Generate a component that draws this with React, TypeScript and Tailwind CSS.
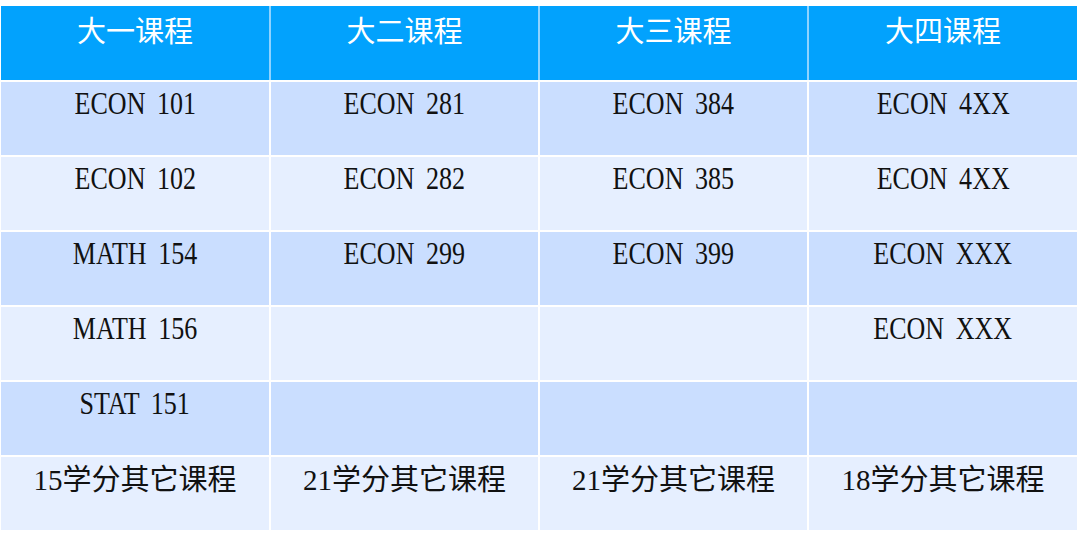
const header = ["大一课程", "大二课程", "大三课程", "大四课程"]

const rows = [
    ["ECON 101", "ECON 281", "ECON 384", "ECON 4XX"],
    ["ECON 102", "ECON 282", "ECON 385", "ECON 4XX"],
    ["MATH 154", "ECON 299", "ECON 399", "ECON XXX"],
    ["MATH 156", "", "", "ECON XXX"],
    ["STAT 151", "", "", ""],
]

const footer = ["15学分其它课程", "21学分其它课程", "21学分其它课程", "18学分其它课程"]

const cols = "grid grid-cols-[268px_267px_267px_268px] gap-x-[2px]"

export default function App() {
    return (
        <div className="w-[1080px] h-[533px] bg-white pt-[6px] pl-[1px] overflow-hidden">
            <div className="flex flex-col gap-y-[2px] w-[1076px]">
                {/* Header */}
                <div className={`${cols} bg-[#8ed3ff]`}>
                    {header.map((h) => (
                        <div
                            key={h}
                            className="h-[74px] bg-[#02a2fd] text-white text-center text-[29px] leading-none pt-[9px] font-['Noto_Sans_CJK_SC',sans-serif]"
                        >
                            {h}
                        </div>
                    ))}
                </div>

                {/* Course rows */}
                {rows.map((row, i) => (
                    <div key={i} className={`${cols} bg-white`}>
                        {row.map((c, j) => (
                            <div
                                key={j}
                                className={`h-[73px] text-center pt-[6px] ${i % 2 === 0 ? "bg-[#cadeff]" : "bg-[#e6efff]"}`}
                            >
                                {c && (
                                    <span className="inline-block scale-x-[0.84] text-[31px] leading-none text-[#111] [word-spacing:6px] font-['Liberation_Serif',serif]">
                                        {c}
                                    </span>
                                )}
                            </div>
                        ))}
                    </div>
                ))}

                {/* Credits row */}
                <div className={`${cols} bg-white`}>
                    {footer.map((f, j) => (
                        <div
                            key={j}
                            className="h-[73px] bg-[#e6efff] text-center pt-[9px] text-[29px] leading-none text-[#111] font-['Liberation_Serif','Noto_Sans_CJK_SC',serif]"
                        >
                            {f}
                        </div>
                    ))}
                </div>
            </div>
        </div>
    )
}
